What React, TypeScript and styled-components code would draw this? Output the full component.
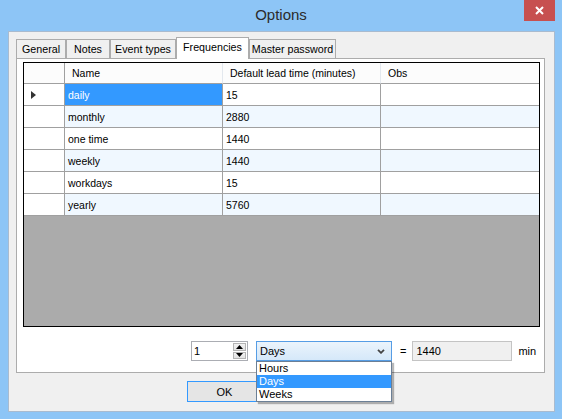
// 选项对话框 (Frequencies 页)
import { FC } from 'react'
import styled, { createGlobalStyle } from 'styled-components'

const GlobalStyle = createGlobalStyle`
	html,
	body {
		margin: 0;
		padding: 0;
	}
	body {
		font-family: 'Liberation Sans', Arial, sans-serif;
		font-size: 10.5px;
		color: #000;
	}
	* {
		box-sizing: border-box;
	}
`

// 数据
const columns = [
	{ title: '', width: 41 },
	{ title: 'Name', width: 158 },
	{ title: 'Default lead time (minutes)', width: 158 },
	{ title: 'Obs', width: 0 }
]

const rows = [
	{ name: 'daily', lead: '15' },
	{ name: 'monthly', lead: '2880' },
	{ name: 'one time', lead: '1440' },
	{ name: 'weekly', lead: '1440' },
	{ name: 'workdays', lead: '15' },
	{ name: 'yearly', lead: '5760' }
]

const tabs = [
	{ label: 'General', width: 50 },
	{ label: 'Notes', width: 44 },
	{ label: 'Event types', width: 66 },
	{ label: 'Frequencies', width: 73 },
	{ label: 'Master password', width: 87 }
]

const units = ['Hours', 'Days', 'Weeks']

// 样式表
const Window = styled.div`
	width: 562px;
	height: 419px;
	background: #8dc5f6;
	display: flex;
	flex-direction: column;
`

const TitleBar = styled.div`
	height: 31px;
	flex: none;
	display: grid;
	grid-template-columns: 1fr auto 1fr;
`

const Title = styled.div`
	grid-column: 2;
	font-size: 15px;
	color: #2b2b2b;
	line-height: 22px;
	padding-top: 4px;
`

const CloseButton = styled.div`
	grid-column: 3;
	justify-self: end;
	width: 31px;
	height: 21px;
	margin-right: 7px;
	background: #c75050;
	display: flex;
	align-items: center;
	justify-content: center;
`

const Client = styled.div`
	flex: 1;
	margin: 0 7px 7px 8px;
	background: #f0f0f0;
	border: 1px solid #a9bbcf;
	display: flex;
	flex-direction: column;
	padding: 5px 9px 0 7px;
`

const TabStrip = styled.div`
	display: flex;
	align-items: flex-end;
	height: 21px;
`

const Tab = styled.div<{ $w: number; $active?: boolean }>`
	width: ${(p) => p.$w}px;
	height: ${(p) => (p.$active ? 22 : 19)}px;
	margin-bottom: ${(p) => (p.$active ? -1 : 0)}px;
	position: relative;
	z-index: ${(p) => (p.$active ? 2 : 0)};
	border: 1px solid #acacac;
	border-bottom: none;
	background: ${(p) => (p.$active ? '#fff' : '#f0f0f0')};
	display: flex;
	align-items: center;
	justify-content: center;
	padding-bottom: ${(p) => (p.$active ? 3 : 0)}px;
	white-space: nowrap;
	font-size: 10.7px;
`

const TabPage = styled.div`
	height: 315px;
	flex: none;
	border: 1px solid #acacac;
	background: #fff;
	padding: 3px 4px 0 6px;
	display: flex;
	flex-direction: column;
`

const Grid = styled.div`
	height: 265px;
	flex: none;
	border: 1px solid #000;
	background: #ababab;
	display: flex;
	flex-direction: column;
`

const HeaderRow = styled.div`
	display: flex;
	height: 21px;
	flex: none;
`

const HeaderCell = styled.div<{ $w: number; $corner?: boolean }>`
	${(p) => (p.$w ? `width: ${p.$w}px;` : 'flex: 1;')}
	background: #fcfcfc;
	border-bottom: 1px solid #a0a0a0;
	border-right: ${(p) => (p.$w ? `1px solid ${p.$corner ? '#a0a0a0' : '#e3e8ee'}` : 'none')};
	padding-left: 7px;
	display: flex;
	align-items: center;
	white-space: nowrap;
	overflow: hidden;
`

const Row = styled.div`
	display: flex;
	height: 22px;
	flex: none;
`

const RowHeader = styled.div`
	width: 41px;
	background: #fff;
	border-right: 1px solid #a0a0a0;
	border-bottom: 1px solid #a0a0a0;
	padding-left: 7px;
	display: flex;
	align-items: center;
`

const Cell = styled.div<{ $w: number; $alt?: boolean; $selected?: boolean }>`
	${(p) => (p.$w ? `width: ${p.$w}px;` : 'flex: 1;')}
	background: ${(p) => (p.$selected ? '#3399ff' : p.$alt ? '#f0f8ff' : '#fff')};
	color: ${(p) => (p.$selected ? '#fff' : '#000')};
	border-right: ${(p) => (p.$w ? '1px solid #a0a0a0' : 'none')};
	border-bottom: 1px solid #a0a0a0;
	padding-left: 3px;
	display: flex;
	align-items: center;
	white-space: nowrap;
`

const Controls = styled.div`
	display: flex;
	align-items: center;
	margin-top: 14px;
	padding-left: 168px;
	font-size: 11px;
`

const Numeric = styled.div`
	width: 57px;
	height: 20px;
	border: 1px solid #abadb3;
	background: #fff;
	display: flex;
`

const NumericValue = styled.div`
	flex: 1;
	padding-left: 2px;
	display: flex;
	align-items: center;
`

const Spin = styled.div`
	width: 13px;
	margin: 1px 1px 1px 0;
	display: flex;
	flex-direction: column;
	gap: 1px;
`

const SpinButton = styled.div`
	flex: 1;
	background: linear-gradient(#f2f2f2, #e2e2e2);
	border: 1px solid #b4b4b4;
	display: flex;
	align-items: center;
	justify-content: center;
`

const Combo = styled.div`
	position: relative;
	width: 136px;
	height: 20px;
	margin-left: 8px;
	border: 1px solid #569de5;
	background: linear-gradient(#ebf4fc, #d5e8f9);
	display: flex;
	align-items: center;
	justify-content: space-between;
	padding: 0 6px 0 3px;
`

const DropList = styled.div`
	position: absolute;
	top: 19px;
	left: -1px;
	width: 136px;
	height: 41px;
	z-index: 10;
	background: #fff;
	border: 1px solid #6b7f96;
	box-shadow: 2px 2px 1px rgba(0, 0, 0, 0.28);
	display: flex;
	flex-direction: column;
`

const DropItem = styled.div<{ $selected?: boolean }>`
	height: 13px;
	line-height: 13px;
	padding-left: 2px;
	background: ${(p) => (p.$selected ? '#3399ff' : '#fff')};
	color: ${(p) => (p.$selected ? '#fff' : '#000')};
`

const Equals = styled.span`
	margin-left: 8px;
`

const ReadOnlyBox = styled.div`
	width: 100px;
	height: 20px;
	margin-left: 6px;
	border: 1px solid #c4c4c4;
	background: #f0f0f0;
	padding-left: 3px;
	display: flex;
	align-items: center;
`

const Unit = styled.span`
	margin-left: 6px;
`

const ButtonRow = styled.div`
	display: flex;
	margin-top: 8px;
	padding-left: 171px;
`

const Button = styled.div`
	width: 75px;
	height: 21px;
	border: 1px solid #3399ff;
	background: #e5e5e5;
	display: flex;
	align-items: center;
	justify-content: center;
	font-size: 11px;
`

// 小图标
const CloseIcon: FC = () => (
	<svg width="9" height="9" viewBox="0 0 9 9">
		<path d="M1 1L8 8M8 1L1 8" stroke="#fff" strokeWidth="2" />
	</svg>
)

const RowArrow: FC = () => (
	<svg width="5" height="8" viewBox="0 0 5 8">
		<path d="M0 0L5 4L0 8Z" fill="#333" />
	</svg>
)

const Chevron: FC = () => (
	<svg width="8" height="5" viewBox="0 0 8 5">
		<path d="M1 0.8L4 3.8L7 0.8" stroke="#444" strokeWidth="1.8" fill="none" />
	</svg>
)

const SpinArrow: FC<{ up?: boolean }> = ({ up }) => (
	<svg width="7" height="4" viewBox="0 0 7 4">
		<path d={up ? 'M0 4L3.5 0L7 4Z' : 'M0 0L3.5 4L7 0Z'} fill="#000" />
	</svg>
)

export const App: FC = () => {
	return (
		<>
			<GlobalStyle />
			<Window>
				<TitleBar>
					<Title>Options</Title>
					<CloseButton>
						<CloseIcon />
					</CloseButton>
				</TitleBar>

				<Client>
					<TabStrip>
						{tabs.map((t) => (
							<Tab key={t.label} $w={t.width} $active={t.label === 'Frequencies'}>
								{t.label}
							</Tab>
						))}
					</TabStrip>

					<TabPage>
						<Grid>
							<HeaderRow>
								{columns.map((c, i) => (
									<HeaderCell key={i} $w={c.width} $corner={i === 0}>
										{c.title}
									</HeaderCell>
								))}
							</HeaderRow>
							{rows.map((r, i) => (
								<Row key={r.name}>
									<RowHeader>{i === 0 && <RowArrow />}</RowHeader>
									<Cell $w={158} $alt={i % 2 === 1} $selected={i === 0}>
										{r.name}
									</Cell>
									<Cell $w={158} $alt={i % 2 === 1}>
										{r.lead}
									</Cell>
									<Cell $w={0} $alt={i % 2 === 1} />
								</Row>
							))}
						</Grid>

						<Controls>
							<Numeric>
								<NumericValue>1</NumericValue>
								<Spin>
									<SpinButton>
										<SpinArrow up />
									</SpinButton>
									<SpinButton>
										<SpinArrow />
									</SpinButton>
								</Spin>
							</Numeric>
							<Combo>
								<span>Days</span>
								<Chevron />
								<DropList>
									{units.map((u) => (
										<DropItem key={u} $selected={u === 'Days'}>
											{u}
										</DropItem>
									))}
								</DropList>
							</Combo>
							<Equals>=</Equals>
							<ReadOnlyBox>1440</ReadOnlyBox>
							<Unit>min</Unit>
						</Controls>
					</TabPage>

					<ButtonRow>
						<Button>OK</Button>
					</ButtonRow>
				</Client>
			</Window>
		</>
	)
}

export default App
